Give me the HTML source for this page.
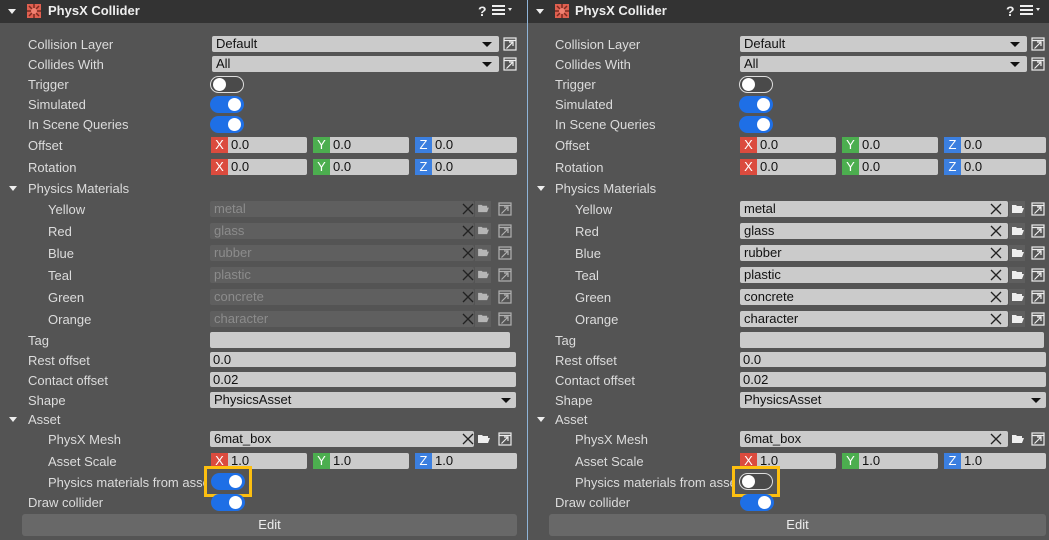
<!DOCTYPE html>
<html><head><meta charset="utf-8"><style>
*{margin:0;padding:0;box-sizing:border-box}
body{width:1049px;height:540px;background:#545454;font-family:"Liberation Sans",sans-serif;font-size:13px;color:#dcdcdc;overflow:hidden;position:relative}
.p{position:absolute;top:0;height:540px;background:#545454;overflow:hidden}
.hd{position:absolute;left:0;top:0;right:0;height:23px;background:#333}
.a{position:absolute}
.l{position:absolute;line-height:16px;white-space:nowrap}
.f{position:absolute;height:16px;background:#cbcbcb;border-radius:2px;color:#111;padding-left:4px;line-height:16px}
.d{background:#5f5f5f;color:#8c8c8c}
.tg{position:absolute;width:34px;height:17px;border-radius:9px;background:#1e6fe6}
.tg:after{content:"";position:absolute;right:3px;top:2px;width:13px;height:13px;border-radius:50%;background:#fff}
.off{background:#4a4a4a;border:1.5px solid #ddd}
.off:after{left:2px;right:auto;top:1px}
.xl{position:absolute;width:17px;height:16px;color:#fff;text-align:center;line-height:16px;font-size:13px}
.tri{position:absolute;width:0;height:0;border-left:4px solid transparent;border-right:4px solid transparent;border-top:5px solid #eee}
.dt{position:absolute;width:0;height:0;border-left:5px solid transparent;border-right:5px solid transparent;border-top:5px solid #111}
</style></head><body>

<svg width="0" height="0" style="position:absolute"><defs>
<symbol id="pk" viewBox="0 0 14 14"><rect x="1" y="1" width="12" height="12" fill="none" stroke="#eee" stroke-width="1.2"/><path d="M1 3.5H13M3.5 11.5L10 5M6 5H10V9" fill="none" stroke="#eee" stroke-width="1.2"/></symbol>
<symbol id="xx" viewBox="0 0 12 12"><path d="M1 1L11 11M11 1L1 11" stroke="#222" stroke-width="1.3"/></symbol>
<symbol id="fd" viewBox="0 0 12 10"><path d="M0 1H4L5 2H10V4H2L0 9Z M2 4H12L10 9H0Z" fill="#eee"/></symbol>
<symbol id="lg" viewBox="0 0 16 16"><rect x="1" y="1" width="14" height="14" fill="#e06050"/><path d="M3 3L13 13M13 3L3 13M8 1V15M1 8H15" stroke="#7a2a20" stroke-width="1.5"/><circle cx="8" cy="8" r="3" fill="#f08070"/></symbol>
</defs></svg>

<div class="p" style="left:0;width:527px">
<div class="hd"></div>
<div class="tri" style="left:8px;top:9px"></div>
<svg class="a" style="left:26px;top:3px" width="16" height="16"><use href="#lg"/></svg>
<div class="l" style="left:48px;top:3px;font-weight:bold;font-size:13px;color:#eee">PhysX Collider</div>
<div class="l" style="left:478px;top:3px;font-weight:bold;font-size:14px;color:#eee">?</div>
<div class="a" style="left:492px;top:5px;width:13px;height:2px;background:#eee;box-shadow:0 4px #eee,0 8px #eee"></div>
<div class="tri" style="left:508px;top:8px;border-width:3px 2px 0;border-top-color:#eee"></div>

<div class="l" style="left:28px;top:37px">Collision Layer</div>
<div class="f" style="left:212px;top:36px;width:287px">Default</div><div class="dt" style="left:482px;top:42px"></div>
<svg class="a" style="left:503px;top:37px" width="14" height="14"><use href="#pk"/></svg>
<div class="l" style="left:28px;top:57px">Collides With</div>
<div class="f" style="left:212px;top:56px;width:287px">All</div><div class="dt" style="left:482px;top:62px"></div>
<svg class="a" style="left:503px;top:57px" width="14" height="14"><use href="#pk"/></svg>
<div class="l" style="left:28px;top:77px">Trigger</div><div class="tg off" style="left:210px;top:76px"></div>
<div class="l" style="left:28px;top:97px">Simulated</div><div class="tg" style="left:210px;top:96px"></div>
<div class="l" style="left:28px;top:117px">In Scene Queries</div><div class="tg" style="left:210px;top:116px"></div>

<div class="l" style="left:28px;top:138px">Offset</div>
<div class="f" style="left:211px;top:137px;width:96px;padding-left:20px">0.0</div><div class="xl" style="left:211px;top:137px;background:#db4b3e">X</div>
<div class="f" style="left:313px;top:137px;width:96px;padding-left:20px">0.0</div><div class="xl" style="left:313px;top:137px;background:#4cae4f">Y</div>
<div class="f" style="left:415px;top:137px;width:102px;padding-left:20px">0.0</div><div class="xl" style="left:415px;top:137px;background:#3b7fe0">Z</div>
<div class="l" style="left:28px;top:160px">Rotation</div>
<div class="f" style="left:211px;top:159px;width:96px;padding-left:20px">0.0</div><div class="xl" style="left:211px;top:159px;background:#db4b3e">X</div>
<div class="f" style="left:313px;top:159px;width:96px;padding-left:20px">0.0</div><div class="xl" style="left:313px;top:159px;background:#4cae4f">Y</div>
<div class="f" style="left:415px;top:159px;width:102px;padding-left:20px">0.0</div><div class="xl" style="left:415px;top:159px;background:#3b7fe0">Z</div>

<div class="tri" style="left:9px;top:186px"></div>
<div class="l" style="left:28px;top:181px">Physics Materials</div>

<div class="l" style="left:48px;top:202px">Yellow</div><div class="f d" style="left:210px;top:201px;width:264px">metal</div>
<div class="l" style="left:48px;top:224px">Red</div><div class="f d" style="left:210px;top:223px;width:264px">glass</div>
<div class="l" style="left:48px;top:246px">Blue</div><div class="f d" style="left:210px;top:245px;width:264px">rubber</div>
<div class="l" style="left:48px;top:268px">Teal</div><div class="f d" style="left:210px;top:267px;width:264px">plastic</div>
<div class="l" style="left:48px;top:290px">Green</div><div class="f d" style="left:210px;top:289px;width:264px">concrete</div>
<div class="l" style="left:48px;top:312px">Orange</div><div class="f d" style="left:210px;top:311px;width:264px">character</div>

<div class="l" style="left:28px;top:333px">Tag</div><div class="f" style="left:210px;top:332px;width:300px"></div>
<div class="l" style="left:28px;top:353px">Rest offset</div><div class="f" style="left:210px;top:352px;width:306px;height:15px;line-height:15px;padding-left:3px">0.0</div>
<div class="l" style="left:28px;top:373px">Contact offset</div><div class="f" style="left:210px;top:372px;width:306px;height:15px;line-height:15px;padding-left:3px">0.02</div>
<div class="l" style="left:28px;top:393px">Shape</div><div class="f" style="left:210px;top:392px;width:306px;height:16px">PhysicsAsset</div><div class="dt" style="left:501px;top:398px"></div>

<div class="tri" style="left:9px;top:417px"></div>
<div class="l" style="left:28px;top:412px">Asset</div>
<div class="l" style="left:48px;top:432px">PhysX Mesh</div><div class="f" style="left:210px;top:431px;width:264px">6mat_box</div>
<svg class="a" style="left:462px;top:433px" width="12" height="12"><use href="#xx"/></svg>
<svg class="a" style="left:478px;top:434px" width="12" height="10"><use href="#fd"/></svg>
<svg class="a" style="left:498px;top:432px" width="14" height="14"><use href="#pk"/></svg>
<div class="l" style="left:48px;top:454px">Asset Scale</div>
<div class="f" style="left:211px;top:453px;width:96px;padding-left:20px">1.0</div><div class="xl" style="left:211px;top:453px;background:#db4b3e">X</div>
<div class="f" style="left:313px;top:453px;width:96px;padding-left:20px">1.0</div><div class="xl" style="left:313px;top:453px;background:#4cae4f">Y</div>
<div class="f" style="left:415px;top:453px;width:102px;padding-left:20px">1.0</div><div class="xl" style="left:415px;top:453px;background:#3b7fe0">Z</div>
<div class="l" style="left:48px;top:475px">Physics materials from asset</div>
<div class="a" style="left:204px;top:466px;width:48px;height:31px;background:#545454;border:3px solid #fdbf10"></div>
<div class="tg" style="left:211px;top:473px"></div>
<div class="l" style="left:28px;top:495px">Draw collider</div><div class="tg" style="left:211px;top:494px"></div>
<div class="a" style="left:22px;top:514px;width:495px;height:22px;background:#686868;border-radius:3px;text-align:center;line-height:22px;color:#eee">Edit</div>
</div>

<div class="a" style="left:527px;top:0;width:1px;height:540px;background:#8fb4d8"></div>

<div class="p" style="left:528px;width:521px">
<div class="hd"></div>
<div class="tri" style="left:8px;top:9px"></div>
<svg class="a" style="left:26px;top:3px" width="16" height="16"><use href="#lg"/></svg>
<div class="l" style="left:47px;top:3px;font-weight:bold;font-size:13px;color:#eee">PhysX Collider</div>
<div class="l" style="left:478px;top:3px;font-weight:bold;font-size:14px;color:#eee">?</div>
<div class="a" style="left:492px;top:5px;width:13px;height:2px;background:#eee;box-shadow:0 4px #eee,0 8px #eee"></div>
<div class="tri" style="left:508px;top:8px;border-width:3px 2px 0;border-top-color:#eee"></div>

<div class="l" style="left:27px;top:37px">Collision Layer</div>
<div class="f" style="left:212px;top:36px;width:287px">Default</div><div class="dt" style="left:482px;top:42px"></div>
<svg class="a" style="left:503px;top:37px" width="14" height="14"><use href="#pk"/></svg>
<div class="l" style="left:27px;top:57px">Collides With</div>
<div class="f" style="left:212px;top:56px;width:287px">All</div><div class="dt" style="left:482px;top:62px"></div>
<svg class="a" style="left:503px;top:57px" width="14" height="14"><use href="#pk"/></svg>
<div class="l" style="left:27px;top:77px">Trigger</div><div class="tg off" style="left:211px;top:76px"></div>
<div class="l" style="left:27px;top:97px">Simulated</div><div class="tg" style="left:211px;top:96px"></div>
<div class="l" style="left:27px;top:117px">In Scene Queries</div><div class="tg" style="left:211px;top:116px"></div>

<div class="l" style="left:27px;top:138px">Offset</div>
<div class="f" style="left:212px;top:137px;width:96px;padding-left:20px">0.0</div><div class="xl" style="left:212px;top:137px;background:#db4b3e">X</div>
<div class="f" style="left:314px;top:137px;width:96px;padding-left:20px">0.0</div><div class="xl" style="left:314px;top:137px;background:#4cae4f">Y</div>
<div class="f" style="left:416px;top:137px;width:102px;padding-left:20px">0.0</div><div class="xl" style="left:416px;top:137px;background:#3b7fe0">Z</div>
<div class="l" style="left:27px;top:160px">Rotation</div>
<div class="f" style="left:212px;top:159px;width:96px;padding-left:20px">0.0</div><div class="xl" style="left:212px;top:159px;background:#db4b3e">X</div>
<div class="f" style="left:314px;top:159px;width:96px;padding-left:20px">0.0</div><div class="xl" style="left:314px;top:159px;background:#4cae4f">Y</div>
<div class="f" style="left:416px;top:159px;width:102px;padding-left:20px">0.0</div><div class="xl" style="left:416px;top:159px;background:#3b7fe0">Z</div>

<div class="tri" style="left:9px;top:186px"></div>
<div class="l" style="left:27px;top:181px">Physics Materials</div>
<div class="l" style="left:47px;top:202px">Yellow</div><div class="f" style="left:212px;top:201px;width:268px">metal</div>
<div class="l" style="left:47px;top:224px">Red</div><div class="f" style="left:212px;top:223px;width:268px">glass</div>
<div class="l" style="left:47px;top:246px">Blue</div><div class="f" style="left:212px;top:245px;width:268px">rubber</div>
<div class="l" style="left:47px;top:268px">Teal</div><div class="f" style="left:212px;top:267px;width:268px">plastic</div>
<div class="l" style="left:47px;top:290px">Green</div><div class="f" style="left:212px;top:289px;width:268px">concrete</div>
<div class="l" style="left:47px;top:312px">Orange</div><div class="f" style="left:212px;top:311px;width:268px">character</div>

<div class="l" style="left:27px;top:333px">Tag</div><div class="f" style="left:212px;top:332px;width:304px"></div>
<div class="l" style="left:27px;top:353px">Rest offset</div><div class="f" style="left:212px;top:352px;width:306px;height:15px;line-height:15px;padding-left:3px">0.0</div>
<div class="l" style="left:27px;top:373px">Contact offset</div><div class="f" style="left:212px;top:372px;width:306px;height:15px;line-height:15px;padding-left:3px">0.02</div>
<div class="l" style="left:27px;top:393px">Shape</div><div class="f" style="left:212px;top:392px;width:306px">PhysicsAsset</div><div class="dt" style="left:503px;top:398px"></div>

<div class="tri" style="left:9px;top:417px"></div>
<div class="l" style="left:27px;top:412px">Asset</div>
<div class="l" style="left:47px;top:432px">PhysX Mesh</div><div class="f" style="left:212px;top:431px;width:268px">6mat_box</div>
<svg class="a" style="left:462px;top:433px" width="12" height="12"><use href="#xx"/></svg>
<svg class="a" style="left:484px;top:434px" width="12" height="10"><use href="#fd"/></svg>
<svg class="a" style="left:503px;top:432px" width="14" height="14"><use href="#pk"/></svg>
<div class="l" style="left:47px;top:454px">Asset Scale</div>
<div class="f" style="left:212px;top:453px;width:96px;padding-left:20px">1.0</div><div class="xl" style="left:212px;top:453px;background:#db4b3e">X</div>
<div class="f" style="left:314px;top:453px;width:96px;padding-left:20px">1.0</div><div class="xl" style="left:314px;top:453px;background:#4cae4f">Y</div>
<div class="f" style="left:416px;top:453px;width:102px;padding-left:20px">1.0</div><div class="xl" style="left:416px;top:453px;background:#3b7fe0">Z</div>
<div class="l" style="left:47px;top:475px">Physics materials from asset</div>
<div class="a" style="left:204px;top:466px;width:48px;height:31px;background:#545454;border:3px solid #fdbf10"></div>
<div class="tg off" style="left:211px;top:473px"></div>
<div class="l" style="left:27px;top:495px">Draw collider</div><div class="tg" style="left:212px;top:494px"></div>
<div class="a" style="left:21px;top:514px;width:497px;height:22px;background:#686868;border-radius:3px;text-align:center;line-height:22px;color:#eee">Edit</div>
</div>

<div class="a" style="left:0;top:0">
<svg class="a" style="left:462px;top:203px" width="12" height="12"><use href="#xx"/></svg><div class="a" style="left:475px;top:201px;width:16px;height:16px;background:#5f5f5f"></div><svg class="a" style="left:478px;top:204px" width="11" height="9" opacity=".6"><use href="#fd"/></svg><svg class="a" style="left:498px;top:202px" width="14" height="14" opacity=".6"><use href="#pk"/></svg>
<svg class="a" style="left:462px;top:225px" width="12" height="12"><use href="#xx"/></svg><div class="a" style="left:475px;top:223px;width:16px;height:16px;background:#5f5f5f"></div><svg class="a" style="left:478px;top:226px" width="11" height="9" opacity=".6"><use href="#fd"/></svg><svg class="a" style="left:498px;top:224px" width="14" height="14" opacity=".6"><use href="#pk"/></svg>
<svg class="a" style="left:462px;top:247px" width="12" height="12"><use href="#xx"/></svg><div class="a" style="left:475px;top:245px;width:16px;height:16px;background:#5f5f5f"></div><svg class="a" style="left:478px;top:248px" width="11" height="9" opacity=".6"><use href="#fd"/></svg><svg class="a" style="left:498px;top:246px" width="14" height="14" opacity=".6"><use href="#pk"/></svg>
<svg class="a" style="left:462px;top:269px" width="12" height="12"><use href="#xx"/></svg><div class="a" style="left:475px;top:267px;width:16px;height:16px;background:#5f5f5f"></div><svg class="a" style="left:478px;top:270px" width="11" height="9" opacity=".6"><use href="#fd"/></svg><svg class="a" style="left:498px;top:268px" width="14" height="14" opacity=".6"><use href="#pk"/></svg>
<svg class="a" style="left:462px;top:291px" width="12" height="12"><use href="#xx"/></svg><div class="a" style="left:475px;top:289px;width:16px;height:16px;background:#5f5f5f"></div><svg class="a" style="left:478px;top:292px" width="11" height="9" opacity=".6"><use href="#fd"/></svg><svg class="a" style="left:498px;top:290px" width="14" height="14" opacity=".6"><use href="#pk"/></svg>
<svg class="a" style="left:462px;top:313px" width="12" height="12"><use href="#xx"/></svg><div class="a" style="left:475px;top:311px;width:16px;height:16px;background:#5f5f5f"></div><svg class="a" style="left:478px;top:314px" width="11" height="9" opacity=".6"><use href="#fd"/></svg><svg class="a" style="left:498px;top:312px" width="14" height="14" opacity=".6"><use href="#pk"/></svg>
</div>
<div class="a" style="left:528px;top:0">
<svg class="a" style="left:462px;top:203px" width="12" height="12"><use href="#xx"/></svg><div class="a" style="left:481px;top:201px;width:16px;height:16px;background:#5f5f5f"></div><svg class="a" style="left:484px;top:204px" width="12" height="10"><use href="#fd"/></svg><svg class="a" style="left:503px;top:202px" width="14" height="14"><use href="#pk"/></svg>
<svg class="a" style="left:462px;top:225px" width="12" height="12"><use href="#xx"/></svg><div class="a" style="left:481px;top:223px;width:16px;height:16px;background:#5f5f5f"></div><svg class="a" style="left:484px;top:226px" width="12" height="10"><use href="#fd"/></svg><svg class="a" style="left:503px;top:224px" width="14" height="14"><use href="#pk"/></svg>
<svg class="a" style="left:462px;top:247px" width="12" height="12"><use href="#xx"/></svg><div class="a" style="left:481px;top:245px;width:16px;height:16px;background:#5f5f5f"></div><svg class="a" style="left:484px;top:248px" width="12" height="10"><use href="#fd"/></svg><svg class="a" style="left:503px;top:246px" width="14" height="14"><use href="#pk"/></svg>
<svg class="a" style="left:462px;top:269px" width="12" height="12"><use href="#xx"/></svg><div class="a" style="left:481px;top:267px;width:16px;height:16px;background:#5f5f5f"></div><svg class="a" style="left:484px;top:270px" width="12" height="10"><use href="#fd"/></svg><svg class="a" style="left:503px;top:268px" width="14" height="14"><use href="#pk"/></svg>
<svg class="a" style="left:462px;top:291px" width="12" height="12"><use href="#xx"/></svg><div class="a" style="left:481px;top:289px;width:16px;height:16px;background:#5f5f5f"></div><svg class="a" style="left:484px;top:292px" width="12" height="10"><use href="#fd"/></svg><svg class="a" style="left:503px;top:290px" width="14" height="14"><use href="#pk"/></svg>
<svg class="a" style="left:462px;top:313px" width="12" height="12"><use href="#xx"/></svg><div class="a" style="left:481px;top:311px;width:16px;height:16px;background:#5f5f5f"></div><svg class="a" style="left:484px;top:314px" width="12" height="10"><use href="#fd"/></svg><svg class="a" style="left:503px;top:312px" width="14" height="14"><use href="#pk"/></svg>
</div>
</body></html>
